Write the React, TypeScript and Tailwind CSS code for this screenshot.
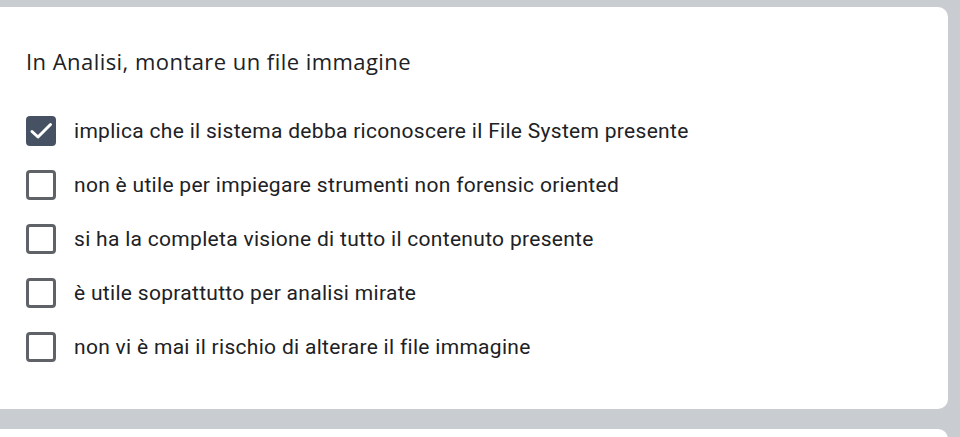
const options = [
  { label: 'implica che il sistema debba riconoscere il File System presente', checked: true },
  { label: 'non è utile per impiegare strumenti non forensic oriented', checked: false },
  { label: 'si ha la completa visione di tutto il contenuto presente', checked: false },
  { label: 'è utile soprattutto per analisi mirate', checked: false },
  { label: 'non vi è mai il rischio di alterare il file immagine', checked: false },
];

function Checkbox({ checked }: { checked: boolean }) {
  if (checked) {
    return (
      <div className="w-[30px] h-[30px] rounded-[4px] bg-[#465263] shrink-0">
        <svg width="30" height="30" viewBox="0 0 30 30" fill="none">
          <path d="M6 15.5l6 5.5L24.5 8.5" stroke="white" strokeWidth="3" strokeLinecap="round" strokeLinejoin="round" />
        </svg>
      </div>
    );
  }
  return <div className="w-[30px] h-[30px] rounded-[4px] border-[3px] border-[#5f6368] shrink-0" />;
}

export default function App() {
  return (
    <div className="w-[960px] h-[437px] bg-[#c9cdd1] overflow-hidden pt-[7px] font-['Roboto',sans-serif]">
      <div className="ml-[-10px] w-[958px] h-[402px] bg-white rounded-[10px] pl-[36px] pt-[39px]">
        <h2 className="text-[22px] leading-[30px] text-[#202124] font-['Open_Sans',sans-serif] tracking-[0.45px]">
          In Analisi, montare un file immagine
        </h2>
        <div className="mt-[40px] flex flex-col gap-[24px]">
          {options.map((o) => (
            <div key={o.label} className="h-[30px] flex items-center gap-[18px]">
              <Checkbox checked={o.checked} />
              <span className="text-[21px] leading-[30px] text-[#202124] tracking-[0.3px]">{o.label}</span>
            </div>
          ))}
        </div>
      </div>
      <div className="ml-[-10px] mt-[20px] w-[958px] h-[40px] bg-white rounded-[10px]" />
    </div>
  );
}
